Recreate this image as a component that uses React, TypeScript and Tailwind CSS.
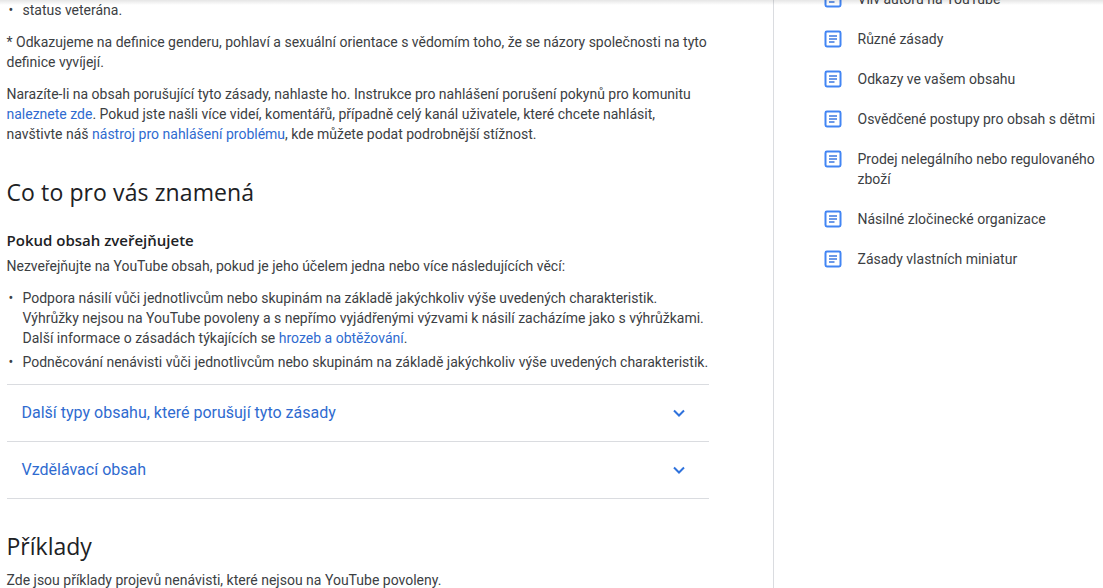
const sideLinks = [
  { text: "Různé zásady" },
  { text: "Odkazy ve vašem obsahu" },
  { text: "Osvědčené postupy pro obsah s dětmi" },
  { text: "Prodej nelegálního nebo regulovaného zboží" },
  { text: "Násilné zločinecké organizace" },
  { text: "Zásady vlastních miniatur" },
];

function DocIcon() {
  return (
    <svg className="w-[18px] h-[18px] shrink-0 mt-px" viewBox="0 0 18 18" fill="none">
      <rect x="1.5" y="1.5" width="15" height="15" rx="1.4" stroke="#4285f4" strokeWidth="2" fill="#fff" />
      <path d="M5 6h8M5 9h8M5 12h5.5" stroke="#3b78e0" strokeWidth="1.4" />
    </svg>
  );
}

function Chevron() {
  return (
    <svg className="w-6 h-6" viewBox="0 0 24 24" fill="none">
      <path d="M7 9.5l5 5 5-5" stroke="#2f72dc" strokeWidth="2" />
    </svg>
  );
}

function Accordion({ title }: { title: string }) {
  return (
    <div className="flex items-center justify-between h-[57px] pl-[15px] pr-[18px] border-b border-[#dadce0]">
      <span className="text-[16px] text-[#2f6bd0]">{title}</span>
      <Chevron />
    </div>
  );
}

export default function App() {
  return (
    <div className="relative h-[588px] w-[1103px] overflow-hidden bg-white font-['Roboto',sans-serif] text-[14px] leading-[20px] text-[#3c4043]">
      <div className="absolute top-0 left-0 right-0 h-[5px] bg-gradient-to-b from-black/10 to-transparent" />
      <div className="flex h-full">
        <main className="w-[702px] ml-[6.5px] shrink-0">
          <ul>
            <li className="flex">
              <span className="w-4 pl-[2px]">•</span>
              <span>status veterána.</span>
            </li>
          </ul>
          <p className="mt-3">
            * Odkazujeme na definice genderu, pohlaví a sexuální orientace s vědomím toho, že se názory společnosti na tyto
            <br />
            definice vyvíjejí.
          </p>
          <p className="mt-3">
            Narazíte-li na obsah porušující tyto zásady, nahlaste ho. Instrukce pro nahlášení porušení pokynů pro komunitu
            <br />
            <a className="text-[#2f6bd0]">naleznete zde</a>. Pokud jste našli více videí, komentářů, případně celý kanál uživatele, které chcete nahlásit,
            <br />
            navštivte náš <a className="text-[#2f6bd0]">nástroj pro nahlášení problému</a>, kde můžete podat podrobnější stížnost.
          </p>
          <h2 className="mt-[32px] font-['Open_Sans',sans-serif] text-[23px] tracking-[0.1px] leading-[32px] text-[#202124]">
            Co to pro vás znamená
          </h2>
          <h3 className="mt-[22px] font-['Open_Sans',sans-serif] text-[15px] font-semibold leading-[20px] text-[#202124]">
            Pokud obsah zveřejňujete
          </h3>
          <p className="mt-[6px]">
            Nezveřejňujte na YouTube obsah, pokud je jeho účelem jedna nebo více následujících věcí:
          </p>
          <ul className="mt-3">
            <li className="flex">
              <span className="w-4 pl-[2px] shrink-0">•</span>
              <span className="whitespace-nowrap">
                Podpora násilí vůči jednotlivcům nebo skupinám na základě jakýchkoliv výše uvedených charakteristik.
                <br />
                Výhrůžky nejsou na YouTube povoleny a s nepřímo vyjádřenými výzvami k násilí zacházíme jako s výhrůžkami.
                <br />
                Další informace o zásadách týkajících se <a className="text-[#2f6bd0]">hrozeb a obtěžování</a>.
              </span>
            </li>
            <li className="flex mt-1">
              <span className="w-4 pl-[2px] shrink-0">•</span>
              <span className="whitespace-nowrap">Podněcování nenávisti vůči jednotlivcům nebo skupinám na základě jakýchkoliv výše uvedených charakteristik.</span>
            </li>
          </ul>
          <div className="mt-3 border-t border-[#dadce0]">
            <Accordion title="Další typy obsahu, které porušují tyto zásady" />
            <Accordion title="Vzdělávací obsah" />
          </div>
          <h2 className="mt-[31px] font-['Open_Sans',sans-serif] text-[23px] leading-[32px] text-[#202124]">Příklady</h2>
          <p className="mt-[8px]">Zde jsou příklady projevů nenávisti, které nejsou na YouTube povoleny.</p>
        </main>
        <aside className="ml-[64.5px] h-full flex-1 border-l border-[#dadce0] pl-[49.5px]">
          <div className="-mt-[11px] flex gap-[16px]">
            <DocIcon />
            <span>Vliv autorů na YouTube</span>
          </div>
          <ul className="mt-5 flex flex-col gap-5">
            {sideLinks.map((link) => (
              <li key={link.text} className="flex gap-[16px]">
                <DocIcon />
                <span className="w-[240px]">{link.text}</span>
              </li>
            ))}
          </ul>
        </aside>
      </div>
    </div>
  );
}
